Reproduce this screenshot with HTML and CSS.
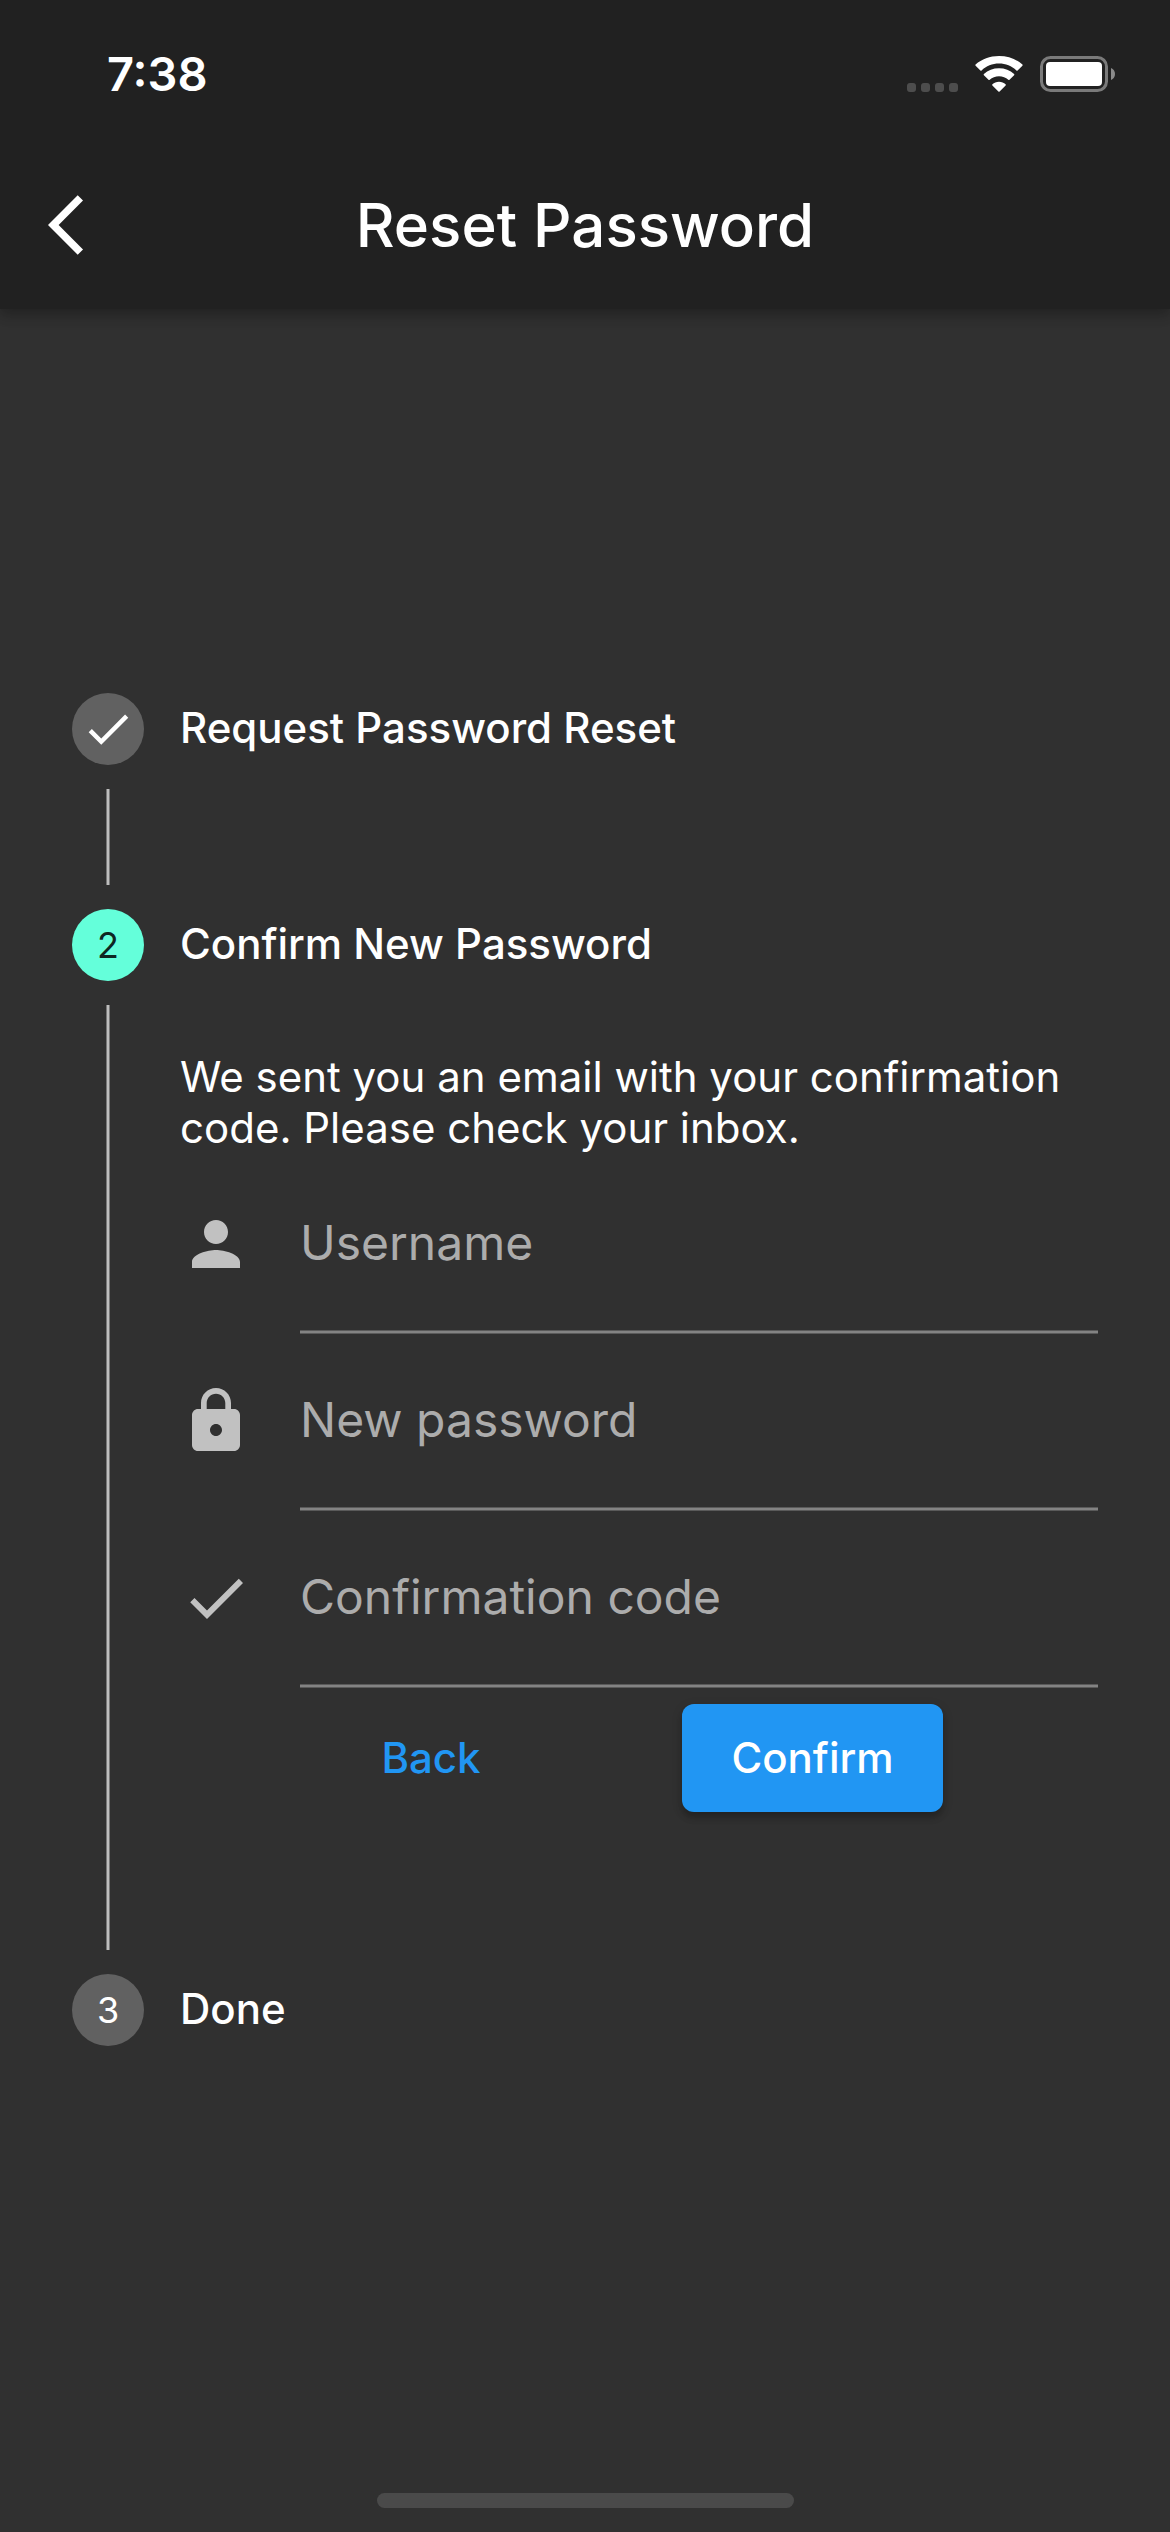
FILE: index.html
```html
<!DOCTYPE html>
<html lang="en">
<head>
<meta charset="utf-8">
<meta name="viewport" content="width=device-width, initial-scale=1">
<title>Reset Password</title>
<link rel="stylesheet" href="styles.css">
</head>
<body>
<header class="top">
  <div class="status">
    <time class="clock">7:38</time>
    <div class="indicators">
      <svg class="signal" viewBox="0 0 51 9" aria-hidden="true"><rect width="9" height="9" rx="3"/><rect x="14" width="9" height="9" rx="3"/><rect x="28" width="9" height="9" rx="3"/><rect x="42" width="9" height="9" rx="3"/></svg>
      <svg class="wifi" viewBox="0 0 48 36" aria-hidden="true"><path d="M24 7.6c6.700 0 12.800 2.600 17.400 6.800.4.3.9.3 1.200 0l4.800-4.700c.4-.4.4-.9 0-1.300C41.300 3.200 33.100 0 24 0S6.700 3.200.6 8.400c-.4.4-.4.9 0 1.300l4.800 4.700c.3.3.8.3 1.200 0C11.200 10.200 17.300 7.600 24 7.600z"/><path d="M24 20.300c3.600 0 6.800 1.300 9.300 3.500.4.3.9.3 1.200 0l4.600-4.600c.4-.4.4-.9 0-1.300C35.100 14.300 29.800 12.300 24 12.300s-11.100 2-15.100 5.600c-.4.4-.4.9 0 1.300l4.600 4.600c.3.3.8.3 1.200 0 2.500-2.200 5.700-3.500 9.300-3.500z"/><path d="M30.600 28.200c.4.4.4 1 0 1.300l-6 6c-.3.4-.9.400-1.200 0l-6-6c-.4-.3-.4-.9 0-1.300 1.700-1.500 4-2.400 6.600-2.400s4.900.9 6.600 2.400z"/></svg>
      <svg class="battery" viewBox="0 0 75 36" aria-hidden="true"><rect x="1.500" y="1.500" width="65" height="33" rx="9"/><rect class="charge" x="6" y="6" width="56" height="24" rx="4"/><path class="nub" d="M71 12c2.500 1 4 3.200 4 6s-1.500 5-4 6z"/></svg>
    </div>
  </div>
  <div class="bar">
    <button class="back" type="button" aria-label="Go back"><svg class="icon" viewBox="0 0 24 24"><path d="M11.670 3.870L9.900 2.100 0 12l9.900 9.900 1.770-1.770L3.540 12z"/></svg></button>
    <h1 class="title">Reset Password</h1>
  </div>
</header>
<main class="main">
  <ol class="stepper">
    <li class="step step-done">
      <div class="rail"><span class="dot"><svg class="tick" viewBox="0 0 24 24" aria-hidden="true"><path d="M9 16.170L4.830 12l-1.420 1.410L9 19 21 7l-1.410-1.410z"/></svg></span><span class="line"></span></div>
      <h2 class="step-title">Request Password Reset</h2>
    </li>
    <li class="step" aria-current="step">
      <div class="rail"><span class="dot dot-active">2</span><span class="line"></span></div>
      <div class="step-body">
        <h2 class="step-title">Confirm New Password</h2>
        <form class="form">
          <p class="hint">We sent you an email with your confirmation code. Please check your inbox.</p>
          <div class="field">
            <label class="field-label" for="username" aria-label="Username"><svg class="icon" viewBox="0 0 24 24" aria-hidden="true"><path d="M12 12c2.210 0 4-1.790 4-4s-1.790-4-4-4-4 1.790-4 4 1.790 4 4 4zm0 2c-2.670 0-8 1.340-8 4v2h16v-2c0-2.660-5.330-4-8-4z"/></svg></label>
            <input class="input" id="username" type="text" placeholder="Username">
          </div>
          <div class="field">
            <label class="field-label" for="password" aria-label="New password"><svg class="icon" viewBox="0 0 24 24" aria-hidden="true"><path d="M18 8h-1V6c0-2.760-2.240-5-5-5S7 3.240 7 6v2H6c-1.100 0-2 .9-2 2v10c0 1.100.9 2 2 2h12c1.100 0 2-.9 2-2V10c0-1.100-.9-2-2-2zm-6 9c-1.100 0-2-.9-2-2s.9-2 2-2 2 .9 2 2-.9 2-2 2zm3.100-9H8.900V6c0-1.710 1.390-3.100 3.100-3.100s3.100 1.390 3.100 3.100v2z"/></svg></label>
            <input class="input" id="password" type="password" placeholder="New password">
          </div>
          <div class="field">
            <label class="field-label" for="code" aria-label="Confirmation code"><svg class="icon" viewBox="0 0 24 24" aria-hidden="true"><path d="M9 16.170L4.830 12l-1.420 1.410L9 19 21 7l-1.410-1.410z"/></svg></label>
            <input class="input" id="code" type="text" placeholder="Confirmation code">
          </div>
          <div class="actions">
            <button class="button" type="button">Back</button>
            <button class="button button-primary" type="submit">Confirm</button>
          </div>
        </form>
      </div>
    </li>
    <li class="step">
      <div class="rail"><span class="dot">3</span></div>
      <h2 class="step-title">Done</h2>
    </li>
  </ol>
</main>
<footer class="home"><span class="home-bar"></span></footer>
</body>
</html>
```
FILE: styles.css
```css
* { box-sizing: border-box; }

body {
  margin: 0;
  min-height: 100vh;
  display: flex;
  flex-direction: column;
  background: #303030;
  color: #fff;
  font-family: Inter, Roboto, sans-serif;
  font-size: 42px;
  line-height: 51px;
}

svg { display: block; fill: currentColor; }
button, input { font: inherit; }
h1, h2, p, ol { margin: 0; padding: 0; }

.icon { width: 72px; height: 72px; }

/* App bar */
.top {
  background: #212121;
  box-shadow: 0 6px 12px rgba(0, 0, 0, .2), 0 3px 15px rgba(0, 0, 0, .12);
}

.status {
  height: 141px;
  padding: 6px 55px 0 107px;
  display: flex;
  align-items: center;
  justify-content: space-between;
}

.clock { font-size: 47px; font-weight: 600; }
.indicators { display: flex; align-items: flex-end; gap: 17px; }
.signal { width: 51px; height: 9px; fill: #4d4d4d; }
.wifi { width: 48px; height: 36px; }
.battery { width: 75px; height: 36px; fill: none; stroke: #7a7a7a; stroke-width: 3; }
.charge { fill: #fff; stroke: none; }
.nub { fill: #8a8a8a; stroke: none; }

.bar {
  height: 168px;
  padding: 0 48px;
  display: grid;
  grid-template-columns: 72px 1fr 72px;
  align-items: center;
}

.back { padding: 0; border: 0; background: none; color: inherit; }
.title { font-size: 60px; line-height: 72px; font-weight: 500; text-align: center; }

/* Stepper */
.main {
  flex: 1;
  display: flex;
  flex-direction: column;
  justify-content: center;
  padding: 0 72px;
}

.stepper { list-style: none; }

.step {
  display: grid;
  grid-template-columns: 72px 1fr;
  column-gap: 36px;
}

.step-done { min-height: 216px; }
.rail { display: flex; flex-direction: column; align-items: center; }

.dot {
  width: 72px;
  height: 72px;
  border-radius: 50%;
  display: grid;
  place-items: center;
  background: #616161;
  font-size: 36px;
}

.dot-active { background: #64ffda; color: rgba(0, 0, 0, .87); }
.tick { width: 54px; height: 54px; }

.line {
  flex: 1;
  width: 4px;
  margin: 24px 0;
  background: #bdbdbd;
  border: solid #777;
  border-width: 0 1px;
}

.step-title { font-size: 42px; line-height: 70px; font-weight: 500; }
.form { padding: 72px 0 145px; }
.hint { margin-bottom: 3px; }

.field {
  height: 177px;
  display: grid;
  grid-template-columns: 72px 1fr;
  column-gap: 48px;
  align-items: center;
  color: #c1c1c1;
}

.field-label { padding-bottom: 2px; }

.input {
  width: 100%;
  height: 100%;
  padding: 0 0 2px;
  border: 0;
  border-bottom: 2px solid #838383;
  border-radius: 0;
  box-shadow: 0 1px #5a5a5a, inset 0 -1px #5a5a5a;
  background: none;
  color: #fff;
  font-size: 48px;
  outline: 0;
}

.input::placeholder { color: #acacac; opacity: 1; }

.actions {
  height: 142px;
  display: flex;
  align-items: center;
  justify-content: space-evenly;
}

.button {
  min-width: 192px;
  height: 108px;
  padding: 0 24px 2px;
  border: 0;
  border-radius: 12px;
  background: none;
  color: #2196f3;
  font-weight: 500;
}

.button-primary {
  min-width: 261px;
  background: #2196f3;
  color: #fff;
  box-shadow: 0 6px 6px rgba(0, 0, 0, .2), 0 3px 12px rgba(0, 0, 0, .12);
}

/* Home indicator */
.home {
  height: 102px;
  padding-bottom: 24px;
  display: flex;
  align-items: flex-end;
  justify-content: center;
}

.home-bar { width: 417px; height: 15px; border-radius: 8px; background: #4a4a4a; }
```
